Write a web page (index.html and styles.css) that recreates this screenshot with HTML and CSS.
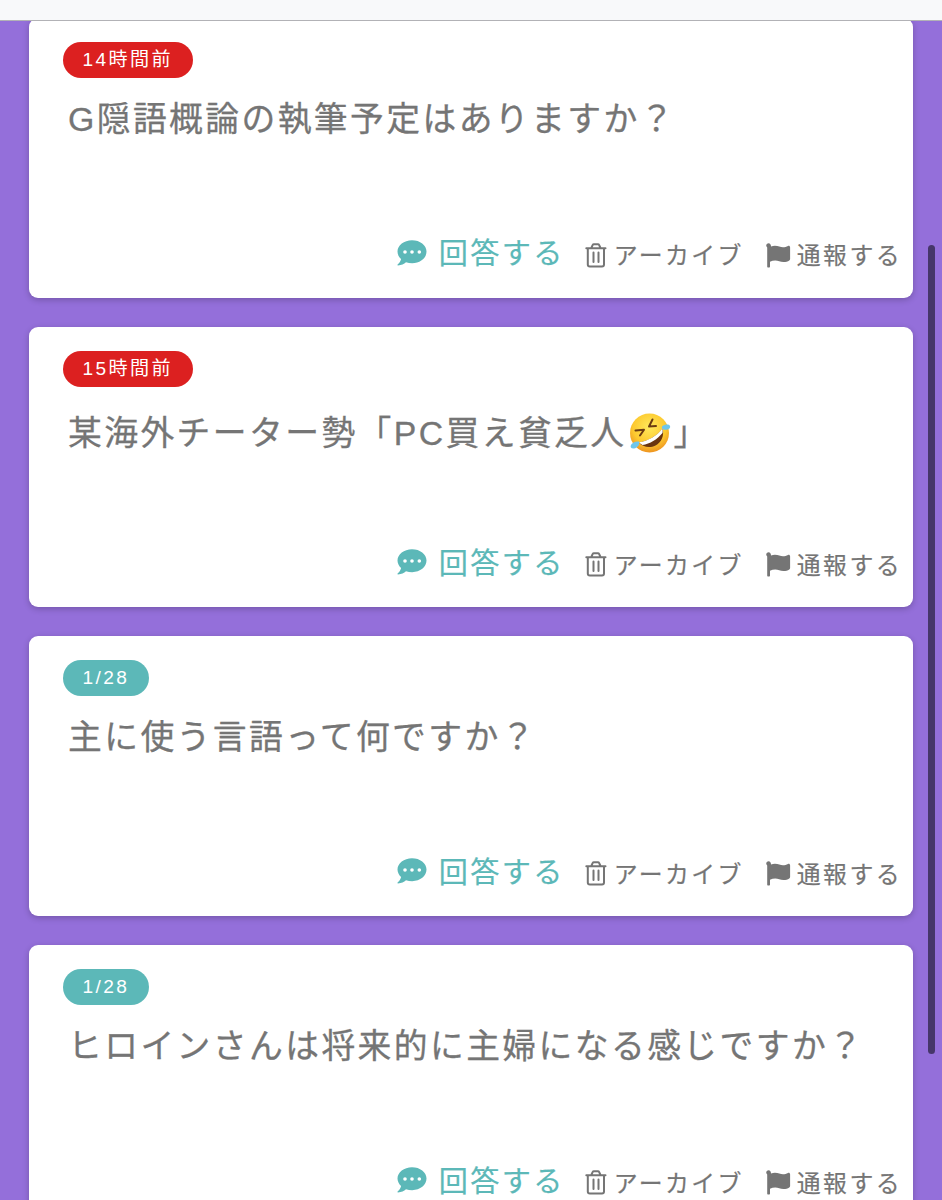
FILE: index.html
```html
<!DOCTYPE html>
<html lang="ja">
<head>
	<meta charset="UTF-8">
	<title>質問一覧</title>
	<link rel="stylesheet" href="styles.css">
</head>
<body>

	<!-- icons -->
	<svg class="icon-set" width="0" height="0">
		<symbol id="icon-comment" viewBox="0 0 30 26">
			<path fill="currentColor" d="M15 .3C7 .3.500 5.300.500 11.600c0 2.900 1.400 5.500 3.600 7.500-.5 2-1.600 4-3.500 5.500-.4.400-.1 1 .4.900 3.500-.2 6-1.500 8-3.200 1.900.6 4 .9 6.200.9 8 0 14.300-5.200 14.300-11.600S23 .3 15 .3z"/>
			<circle cx="8" cy="12" r="1.800" fill="#fff"/><circle cx="15" cy="12" r="1.800" fill="#fff"/><circle cx="22.300" cy="12" r="1.800" fill="#fff"/>
		</symbol>
		<symbol id="icon-trash" viewBox="0 0 22 25">
			<path fill="none" stroke="currentColor" stroke-width="2" stroke-linecap="round" stroke-linejoin="round" d="M1.300 5.300h19.200M2.800 5.300v16.200q0 2 2 2h12.200q2 0 2-2V5.300M6.300 5l1.300-2.900q.4-.8 1.300-.8h4q.9 0 1.300.8l1.300 2.900M8.500 9.500v9.500M13.500 9.500v9.500"/>
		</symbol>
		<symbol id="icon-flag" viewBox="0 0 25 25">
			<path fill="currentColor" d="M2.600.2C1.200.2.200 1.200.200 2.500c0 .8.400 1.500 1 1.900v19c0 .6.400 1 1 1h.8c.6 0 1-.4 1-1v-4.700c1.700-.8 3.300-1.200 5.200-1.200 3 0 5 1.600 8.300 1.600 2.300 0 4.200-.7 5.800-1.700.500-.3.800-.8.800-1.400V4.300c0-1.100-1.100-1.800-2.100-1.300-1.600.7-3.300 1.300-5 1.300-2.500 0-4.700-1.600-8.100-1.600-1.300 0-2.500.2-3.900.7.100-1.700-.9-3.200-2.400-3.200z"/>
		</symbol>
		<symbol id="icon-rofl" viewBox="0 0 42 42">
			<defs>
				<radialGradient id="rofl-face" cx=".5" cy=".35" r=".65">
					<stop offset="0" stop-color="#ffe95c"/>
					<stop offset=".65" stop-color="#fdc92f"/>
					<stop offset="1" stop-color="#ee9420"/>
				</radialGradient>
			</defs>
			<circle cx="20.500" cy="21" r="19.500" fill="url(#rofl-face)"/>
			<path fill="#6b3510" d="M10 30.500C19 29 28 24 33.500 16.500c2 7-1 14-7 17-6 3-13 1.500-16.500-3z"/>
			<path fill="#fff" d="M10 30.300C19 29 28 24 33.300 16.500c.5 1.500.5 3 .2 4.500C28 27.500 21 32 13.500 33c-1.500-.8-2.500-1.600-3.500-2.700z"/>
			<path fill="none" stroke="#6b3b12" stroke-width="2" stroke-linecap="round" stroke-linejoin="round" d="M6.500 18.500l8.500-.7-4 5.700M23.500 7.500L20 14.500l7-.5"/>
			<path fill="#6fc6ea" d="M33 14.500c3-2.500 7-2.500 8-.5 1 2.500-2.500 4.500-6.500 3.500-1-.3-2-1.500-1.500-3zM10 29.500c1 3-1.500 6.500-5 7-3 .2-4-1.500-3-3.500 1-2.300 4.500-4 8-3.500z"/>
		</symbol>
	</svg>

	<div class="topbar"></div>

	<div class="content">

		<div class="card">
			<span class="badge badge-new">14時間前</span>
			<p class="question">G隠語概論の執筆予定はありますか？</p>
			<div class="actions">
				<a class="btn-answer"><svg><use href="#icon-comment"/></svg>回答する</a>
				<a class="btn-archive"><svg><use href="#icon-trash"/></svg>アーカイブ</a>
				<a class="btn-report"><svg><use href="#icon-flag"/></svg>通報する</a>
			</div>
		</div>

		<div class="card">
			<span class="badge badge-new">15時間前</span>
			<p class="question has-emoji">某海外チーター勢「PC買え貧乏人<svg class="emoji"><use href="#icon-rofl"/></svg>」</p>
			<div class="actions">
				<a class="btn-answer"><svg><use href="#icon-comment"/></svg>回答する</a>
				<a class="btn-archive"><svg><use href="#icon-trash"/></svg>アーカイブ</a>
				<a class="btn-report"><svg><use href="#icon-flag"/></svg>通報する</a>
			</div>
		</div>

		<div class="card">
			<span class="badge">1/28</span>
			<p class="question">主に使う言語って何ですか？</p>
			<div class="actions">
				<a class="btn-answer"><svg><use href="#icon-comment"/></svg>回答する</a>
				<a class="btn-archive"><svg><use href="#icon-trash"/></svg>アーカイブ</a>
				<a class="btn-report"><svg><use href="#icon-flag"/></svg>通報する</a>
			</div>
		</div>

		<div class="card">
			<span class="badge">1/28</span>
			<p class="question">ヒロインさんは将来的に主婦になる感じですか？</p>
			<div class="actions">
				<a class="btn-answer"><svg><use href="#icon-comment"/></svg>回答する</a>
				<a class="btn-archive"><svg><use href="#icon-trash"/></svg>アーカイブ</a>
				<a class="btn-report"><svg><use href="#icon-flag"/></svg>通報する</a>
			</div>
		</div>

	</div>

	<div class="scrollbar"></div>

</body>
</html>
```
FILE: styles.css
```css
*{ box-sizing: border-box; }
body{
	position: relative;
	height: 1200px;
	margin: 0;
	overflow: hidden;
	background: #946fda;
	color: #757575;
	font-family: "Liberation Sans", "Noto Sans CJK JP", sans-serif;
	letter-spacing: 2.4px;
}
.icon-set{ position: absolute; }

.topbar{
	position: absolute;
	top: 0;
	left: 0;
	z-index: 10;
	width: 100%;
	height: 21px;
	background: #f8f9fa;
	border-bottom: 1px solid #b2b2b6;
}

.content{ padding: 17.700px 29px 0; }

.card{
	display: flex;
	flex-direction: column;
	align-items: flex-start;
	height: 280.200px;
	margin-bottom: 29px;
	padding: 24px 10px 26px 34px;
	background: #fff;
	border-radius: 9px;
	box-shadow: 0 2px 6px rgba(0, 0, 0, 0.22);
}

.badge{
	height: 36px;
	padding: 0 20px 0 19.500px;
	border-radius: 18px;
	background: #5cb8b8;
	color: #fff;
	font-size: 19.100px;
	line-height: 36px;
}
.badge-new{ background: #dc2020; }

.question{
	margin: 17px 0 0 5px;
	font-size: 33.800px;
	line-height: 48px;
	white-space: nowrap;
	-webkit-text-stroke: 0.3px;
}
.has-emoji{ margin-top: 22px; }
.emoji{
	width: 42px;
	height: 42px;
	margin: 0 3px 0 2px;
	vertical-align: -9px;
}

.actions{
	display: flex;
	align-items: center;
	align-self: flex-end;
	height: 36px;
	margin-top: auto;
	font-size: 23.900px;
	white-space: nowrap;
	-webkit-text-stroke: 0.2px;
}
.actions a{
	display: flex;
	align-items: center;
}
.actions svg{ -webkit-text-stroke: 0; }
.btn-answer{
	margin-right: 20px;
	padding-bottom: 5px;
	color: #5cb8b8;
	font-size: 29.100px;
}
.btn-answer svg{
	width: 30px;
	height: 26px;
	margin: 3px 12px 0 0;
}
.btn-archive{ margin-right: 22px; }
.btn-archive svg{
	width: 22px;
	height: 25px;
	margin: 3px 7px 0 0;
}
.btn-report{ margin-right: 1px; }
.btn-report svg{
	width: 25px;
	height: 25px;
	margin: 3px 6px 0 0;
}

.scrollbar{
	position: absolute;
	top: 245px;
	left: 928px;
	width: 7px;
	height: 809px;
	border-radius: 4px;
	background: #46366a;
}
```
